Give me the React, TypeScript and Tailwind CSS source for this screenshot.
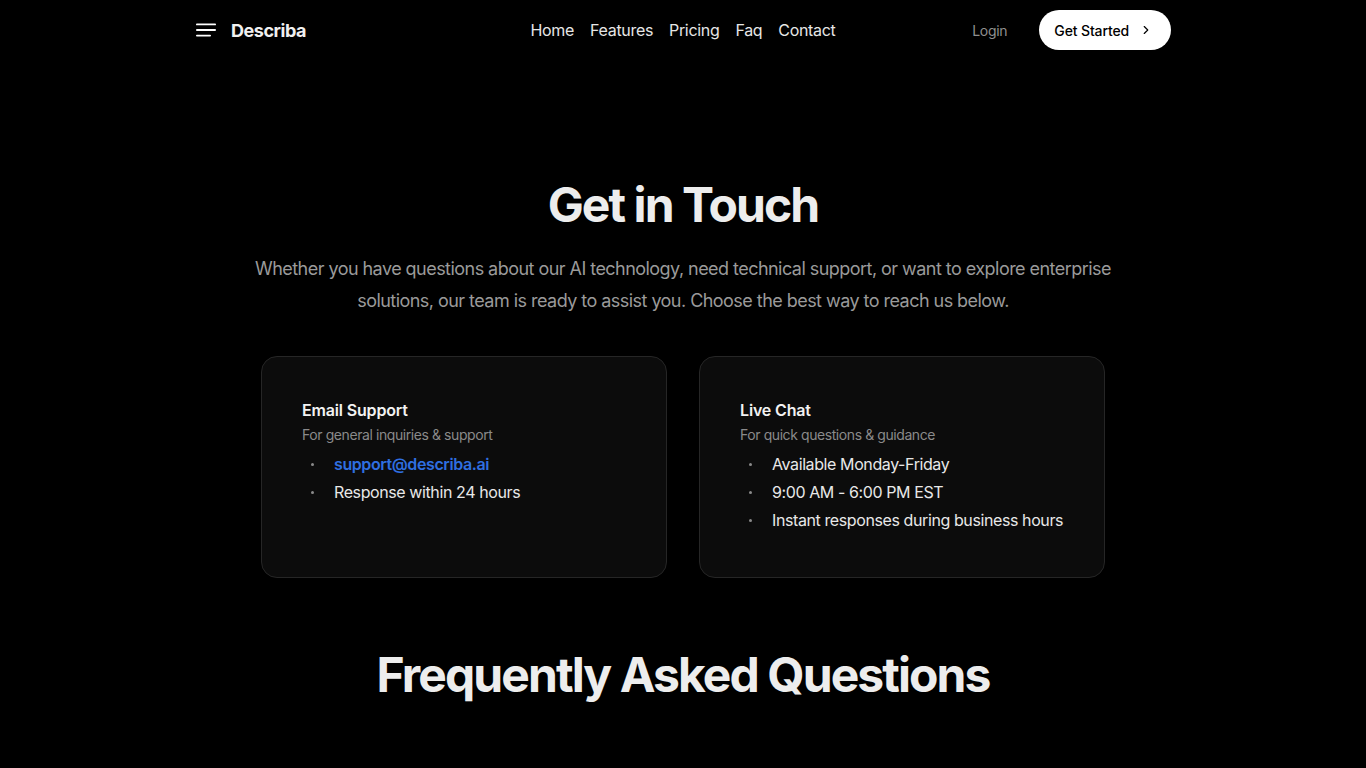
import React from 'react';
import { ChevronRight } from 'lucide-react';

const font = { fontFamily: 'Inter, "Noto Sans", sans-serif' };

function ContactCard({ title, subtitle, items }: { title: string; subtitle: string; items: React.ReactNode[] }) {
  return (
    <div className="h-[222px] rounded-2xl border border-[#262626] bg-[#0c0c0c] px-10 pt-[41px]">
      <h3 className="text-base font-semibold leading-6 tracking-[-0.01em] text-[#f2f2f2]">{title}</h3>
      <p className="mt-[3px] text-[14px] leading-5 tracking-[-0.03em] text-[#8a8a8a]">{subtitle}</p>
      <ul className="mt-[7px] space-y-[4px]">
        {items.map((item, i) => (
          <li key={i} className="flex h-6 items-center">
            <span className="ml-[9px] mr-[20px] h-[3px] w-[3px] rounded-full bg-[#8a8a8a]" />
            <span className="whitespace-nowrap text-base tracking-[-0.025em] text-[#e8e8e8]">{item}</span>
          </li>
        ))}
      </ul>
    </div>
  );
}

export default function App() {
  return (
    <div className="min-h-screen bg-black text-white" style={font}>
      {/* Nav */}
      <header className="mx-auto flex h-[60px] max-w-[976px] items-center justify-between">
        <div className="flex w-[300px] items-center gap-[14px] pl-[1px]">
          <svg width="21" height="16" viewBox="0 0 21 16" className="text-white">
            <rect x="0" y="1.5" width="20" height="1.8" rx="0.9" fill="currentColor" />
            <rect x="0" y="7.1" width="20" height="1.8" rx="0.9" fill="currentColor" />
            <rect x="0" y="12.7" width="15" height="1.8" rx="0.9" fill="currentColor" />
          </svg>
          <span className="text-[18px] font-bold tracking-tight text-[#f0f0f0]">Describa</span>
        </div>
        <nav className="flex items-center gap-4 text-base tracking-[-0.02em] text-[#e6e6e6]">
          <a>Home</a>
          <a>Features</a>
          <a>Pricing</a>
          <a>Faq</a>
          <a>Contact</a>
        </nav>
        <div className="flex w-[300px] items-center justify-end gap-8">
          <a className="text-[14px] tracking-[-0.02em] text-[#8f8f8f]">Login</a>
          <button className="flex h-10 items-center gap-[10px] rounded-full bg-white pl-[15px] pr-[18px] text-[14px] font-medium tracking-[-0.01em] text-black">
            Get Started
            <ChevronRight size={14} strokeWidth={2} />
          </button>
        </div>
      </header>

      {/* Contact */}
      <section className="mx-auto max-w-[976px] pt-[117px] text-center">
        <h1 className="text-[48px] font-bold leading-[56px] tracking-[-0.04em] text-[#ededed]">Get in Touch</h1>
        <p className="mx-auto mt-5 max-w-[880px] text-[18px] leading-[32px] tracking-[-0.03em] text-[#9a9a9a]">
          Whether you have questions about our AI technology, need technical support, or want to explore enterprise
          solutions, our team is ready to assist you. Choose the best way to reach us below.
        </p>
      </section>

      <section className="mx-auto mt-[39px] grid max-w-[844px] grid-cols-2 gap-8 text-left">
        <ContactCard
          title="Email Support"
          subtitle="For general inquiries & support"
          items={[
            <a className="font-semibold text-[#2f6fe0]">support@describa.ai</a>,
            'Response within 24 hours',
          ]}
        />
        <ContactCard
          title="Live Chat"
          subtitle="For quick questions & guidance"
          items={['Available Monday-Friday', '9:00 AM - 6:00 PM EST', 'Instant responses during business hours']}
        />
      </section>

      {/* FAQ */}
      <section className="pt-[69px] text-center">
        <h2 className="text-[48px] font-bold leading-[56px] tracking-[-0.04em] text-[#ededed]">Frequently Asked Questions</h2>
      </section>
    </div>
  );
}
